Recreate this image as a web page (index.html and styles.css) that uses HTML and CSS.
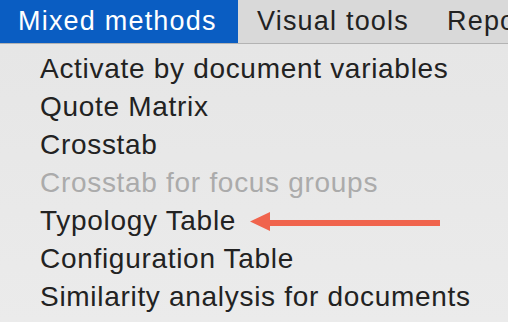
FILE: index.html
```html
<!DOCTYPE html>
<html>
<head>
<meta charset="utf-8">
<link rel="stylesheet" href="styles.css">
</head>
<body>
<div class="menubar">
  <div class="menu-title active">Mixed methods</div>
  <div class="menu-title">Visual tools</div>
  <div class="menu-title">Reports</div>
</div>
<div class="menu">
  <div class="item">Activate by document variables</div>
  <div class="item">Quote Matrix</div>
  <div class="item">Crosstab</div>
  <div class="item disabled">Crosstab for focus groups</div>
  <div class="item">Typology Table</div>
  <div class="item">Configuration Table</div>
  <div class="item">Similarity analysis for documents</div>
  <svg class="arrow" width="192" height="22" viewBox="0 0 192 22">
    <polygon points="0,10.5 20,1 20,9 190,9 190,15 20,15 20,20" fill="#f0644d"/>
  </svg>
</div>
</body>
</html>
```
FILE: styles.css
```css
html, body {
  margin: 0;
  padding: 0;
  width: 508px;
  height: 322px;
  overflow: hidden;
  font-family: "Liberation Sans", Arial, sans-serif;
  background: #e9e9e9;
}
.menubar {
  display: flex;
  height: 43px;
  background: #d9d9d9;
  border-bottom: 1px solid #b3b3b3;
  white-space: nowrap;
  overflow: hidden;
}
.menu-title {
  padding: 0 19px;
  font-size: 27px;
  letter-spacing: 1.2px;
  line-height: 43px;
  color: #222;
  flex: none;
}
.menu-title.active {
  background: #0a5dc2;
  color: #fff;
  box-sizing: border-box;
  width: 238px;
  padding-left: 18px;
}
.menu {
  position: relative;
  padding: 6px 0 0 40px;
  background: linear-gradient(#e6e6e6, #ebebeb);
  height: 272px;
}
.item {
  font-size: 28px;
  letter-spacing: 0.7px;
  line-height: 38px;
  height: 38px;
  color: #222;
  white-space: nowrap;
}
.item.disabled {
  color: #ababab;
}
.arrow {
  position: absolute;
  left: 250px;
  top: 167px;
}
```
